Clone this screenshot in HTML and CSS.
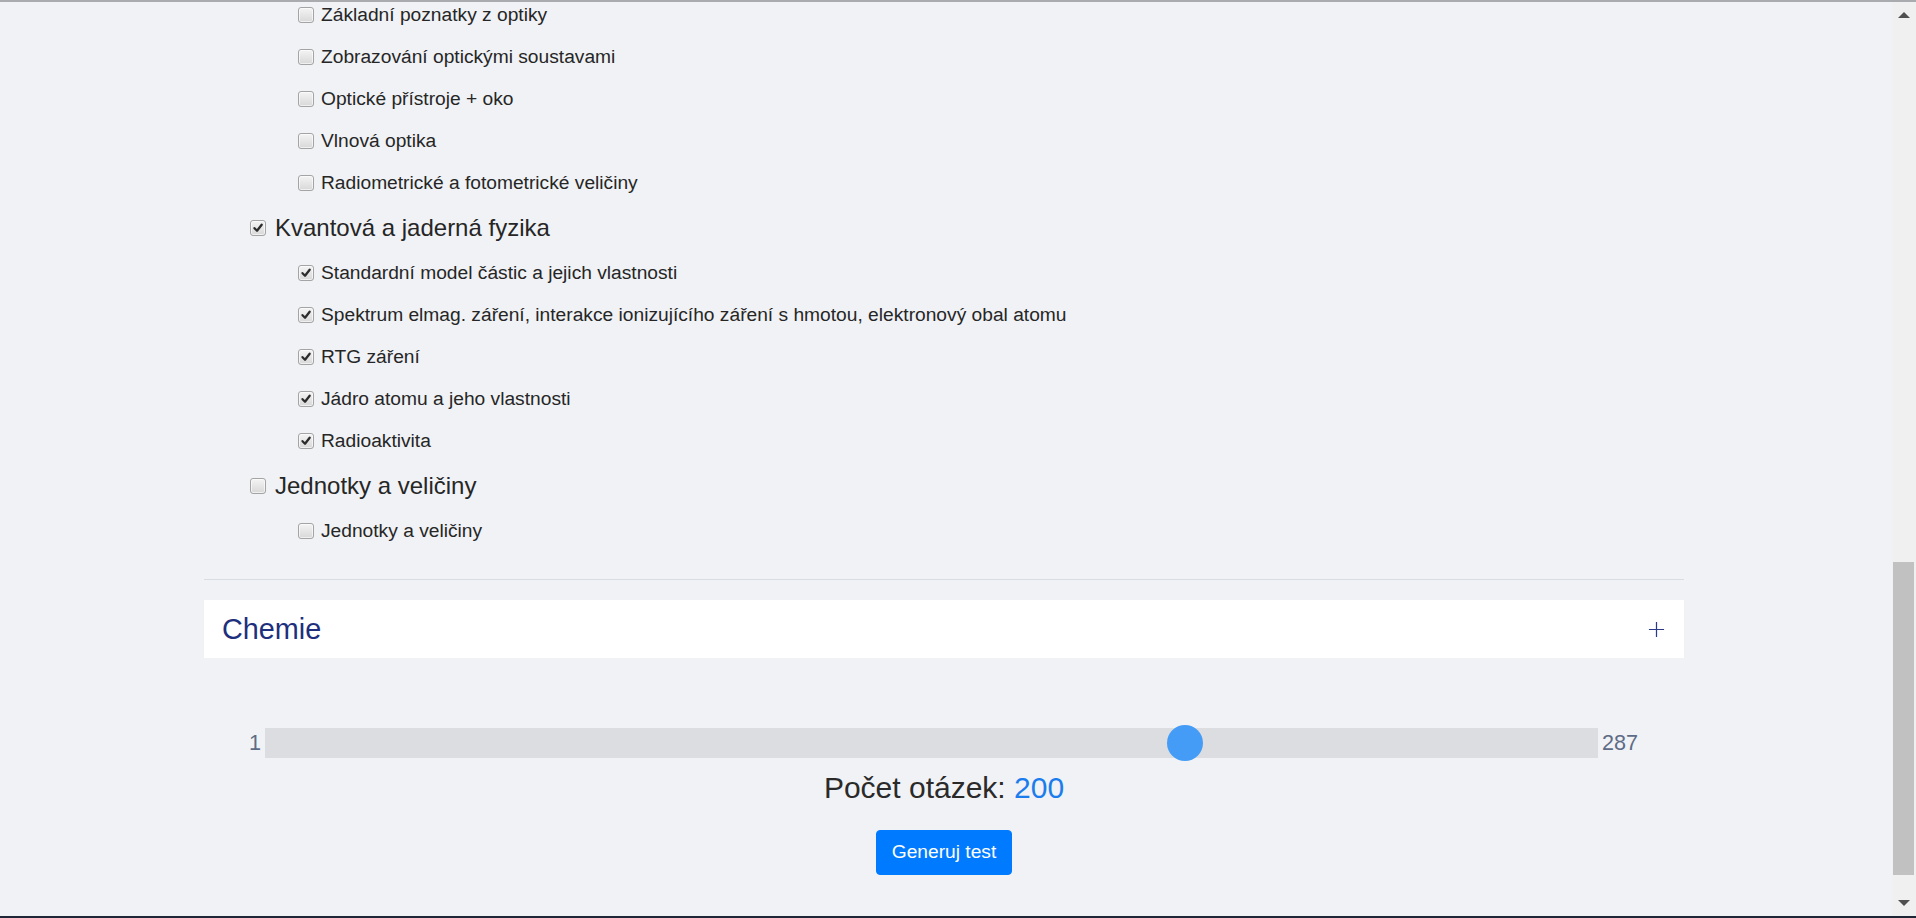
FILE: index.html
```html
<!DOCTYPE html>
<html lang="cs">
<head>
<meta charset="utf-8">
<title>Generuj test</title>
<link rel="stylesheet" href="styles.css">
</head>
<body>
<div class="topline"></div>
<div class="viewport">
  <main class="page">
    <div class="container">
      <div class="topics">
        <label class="row sub"><span class="cb"></span><span>Základní poznatky z optiky</span></label>
        <label class="row sub"><span class="cb"></span><span>Zobrazování optickými soustavami</span></label>
        <label class="row sub"><span class="cb"></span><span>Optické přístroje + oko</span></label>
        <label class="row sub"><span class="cb"></span><span>Vlnová optika</span></label>
        <label class="row sub"><span class="cb"></span><span>Radiometrické a fotometrické veličiny</span></label>
        <label class="row main-topic"><span class="cb checked"><svg viewBox="0 0 16 16"><path d="M4 8.2 L6.9 11.2 L12.2 4.3"/></svg></span><span>Kvantová a jaderná fyzika</span></label>
        <label class="row sub"><span class="cb checked"><svg viewBox="0 0 16 16"><path d="M4 8.2 L6.9 11.2 L12.2 4.3"/></svg></span><span>Standardní model částic a jejich vlastnosti</span></label>
        <label class="row sub"><span class="cb checked"><svg viewBox="0 0 16 16"><path d="M4 8.2 L6.9 11.2 L12.2 4.3"/></svg></span><span>Spektrum elmag. záření, interakce ionizujícího záření s hmotou, elektronový obal atomu</span></label>
        <label class="row sub"><span class="cb checked"><svg viewBox="0 0 16 16"><path d="M4 8.2 L6.9 11.2 L12.2 4.3"/></svg></span><span>RTG záření</span></label>
        <label class="row sub"><span class="cb checked"><svg viewBox="0 0 16 16"><path d="M4 8.2 L6.9 11.2 L12.2 4.3"/></svg></span><span>Jádro atomu a jeho vlastnosti</span></label>
        <label class="row sub"><span class="cb checked"><svg viewBox="0 0 16 16"><path d="M4 8.2 L6.9 11.2 L12.2 4.3"/></svg></span><span>Radioaktivita</span></label>
        <label class="row main-topic"><span class="cb"></span><span>Jednotky a veličiny</span></label>
        <label class="row sub"><span class="cb"></span><span>Jednotky a veličiny</span></label>
      </div>
      <hr class="divider">
      <div class="card">
        <span class="card-title">Chemie</span>
        <svg class="plus" viewBox="0 0 18 18"><path d="M9 1 V17 M1 9 H17"/></svg>
      </div>
      <div class="slider-row">
        <span class="slider-label">1</span>
        <input class="slider" type="range" min="1" max="287" value="200">
        <span class="slider-label">287</span>
      </div>
      <div class="count">Počet otázek: <span class="count-value">200</span></div>
      <div class="actions">
        <button class="btn" type="button">Generuj test</button>
      </div>
    </div>
  </main>
  <div class="scrollbar">
    <div class="sb-btn"><span class="arrow up"></span></div>
    <div class="sb-track"><div class="sb-thumb"></div></div>
    <div class="sb-btn"><span class="arrow down"></span></div>
  </div>
</div>
<div class="bottomline"></div>
</body>
</html>
```
FILE: styles.css
```css
* { box-sizing: border-box; }
html, body {
  margin: 0;
  padding: 0;
  height: 918px;
  overflow: hidden;
}
body {
  background: #f0f2f5;
  font-family: "Liberation Sans", Arial, sans-serif;
  color: #262626;
}
.topline {
  height: 2px;
  background: #a9abae;
}
.bottomline {
  height: 2px;
  background: #1f2636;
}
.viewport {
  display: flex;
  height: 914px;
}
.page {
  flex: 1;
  overflow: hidden;
  padding-right: 4px;
}
.container {
  width: 1480px;
  margin: 0 auto;
}
.topics {
  margin-top: -8px;
  display: flex;
  flex-direction: column;
}
.row {
  display: flex;
  align-items: center;
}
.row.sub {
  height: 42px;
  padding-left: 94px;
  gap: 7px;
  font-size: 19.2px;
}
.row.main-topic {
  height: 48px;
  padding-left: 46px;
  gap: 9px;
  font-size: 24px;
}
.cb {
  width: 16px;
  height: 16px;
  flex: none;
  border: 1px solid #a4a4a4;
  border-radius: 3px;
  background: linear-gradient(#f4f4f4, #d8d8d8);
  box-shadow: inset 0 0 0 1px rgba(255,255,255,0.6);
  display: flex;
  align-items: center;
  justify-content: center;
}
.cb svg {
  width: 14px;
  height: 14px;
}
.cb svg path {
  fill: none;
  stroke: #2b2b2b;
  stroke-width: 2.6;
  stroke-linecap: round;
  stroke-linejoin: round;
}
.divider {
  margin: 27px 0 0;
  border: 0;
  border-top: 1px solid #d9dce1;
  height: 0;
}
.card {
  margin-top: 20px;
  height: 58px;
  background: #fff;
  display: flex;
  align-items: center;
  justify-content: space-between;
  padding: 0 19px 0 18px;
}
.card-title {
  font-size: 28.8px;
  color: #1e2f7d;
}
.plus {
  width: 17px;
  height: 17px;
}
.plus path {
  stroke: #2a3a85;
  stroke-width: 1.3;
  fill: none;
}
.slider-row {
  margin-top: 67px;
  height: 36px;
  display: flex;
  align-items: center;
  gap: 4px;
  padding: 0 46px 0 45px;
}
.slider-label {
  font-size: 21.6px;
  color: #5e6b86;
}
.slider {
  flex: 1;
  margin: 0;
  height: 36px;
  -webkit-appearance: none;
  appearance: none;
  background: transparent;
}
.slider::-webkit-slider-runnable-track {
  height: 30px;
  background: #dcdde0;
  border: 0;
}
.slider::-webkit-slider-thumb {
  -webkit-appearance: none;
  appearance: none;
  width: 36px;
  height: 36px;
  margin-top: -3px;
  border-radius: 50%;
  background: #449cf6;
  border: 0;
}
.count {
  margin-top: 9px;
  text-align: center;
  font-size: 30px;
  line-height: 36px;
  color: #2a2a2a;
}
.count-value {
  color: #1b7ded;
}
.actions {
  margin-top: 24px;
  display: flex;
  justify-content: center;
}
.btn {
  font-family: "Liberation Sans", Arial, sans-serif;
  font-size: 19.2px;
  line-height: 28.8px;
  padding: 7.2px 14.4px;
  border: 1px solid #007bff;
  border-radius: 4px;
  background: #007bff;
  color: #fff;
}
.scrollbar {
  width: 24px;
  flex: none;
  background: #f0f0f0;
  display: flex;
  flex-direction: column;
}
.sb-btn {
  height: 26px;
  display: flex;
  align-items: center;
  justify-content: center;
}
.arrow {
  width: 0;
  height: 0;
  border-left: 6px solid transparent;
  border-right: 6px solid transparent;
}
.arrow.up { border-bottom: 6px solid #505050; }
.arrow.down { border-top: 6px solid #505050; }
.sb-track {
  flex: 1;
  display: flex;
  flex-direction: column;
  justify-content: flex-end;
  padding: 0 2px 15px 1px;
}
.sb-thumb {
  height: 313px;
  background: #c1c1c1;
}
```
